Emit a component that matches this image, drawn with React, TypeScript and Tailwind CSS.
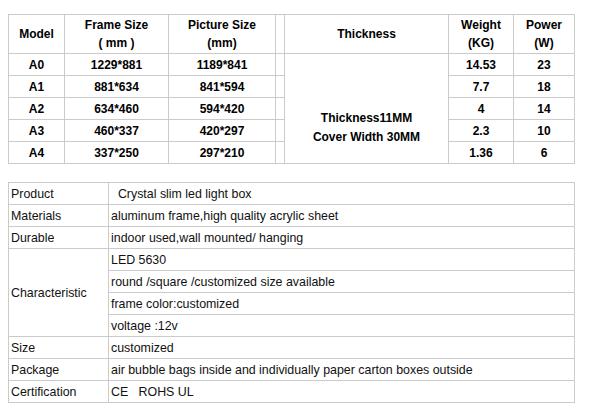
const sizes = [
  { model: 'A0', frame: '1229*881', picture: '1189*841', weight: '14.53', power: '23' },
  { model: 'A1', frame: '881*634', picture: '841*594', weight: '7.7', power: '18' },
  { model: 'A2', frame: '634*460', picture: '594*420', weight: '4', power: '14' },
  { model: 'A3', frame: '460*337', picture: '420*297', weight: '2.3', power: '10' },
  { model: 'A4', frame: '337*250', picture: '297*210', weight: '1.36', power: '6' },
]

const specs: { label: string; values: string[] }[] = [
  { label: 'Product', values: ['\u00a0 Crystal slim led light box'] },
  { label: 'Materials', values: ['aluminum frame,high quality acrylic sheet'] },
  { label: 'Durable', values: ['indoor used,wall mounted/ hanging'] },
  {
    label: 'Characteristic',
    values: ['LED 5630', 'round /square /customized size available', 'frame color:customized', 'voltage :12v'],
  },
  { label: 'Size', values: ['customized'] },
  { label: 'Package', values: ['air bubble bags inside and individually paper carton boxes outside'] },
  { label: 'Certification', values: ['CE \u00a0 ROHS UL'] },
]

const cell = 'border border-[#cbcbcb] p-0'

export default function App() {
  return (
    <div className="min-h-[410px] bg-white pl-2 pt-[14px] text-[12px] leading-[18px] text-black [font-family:'Liberation_Sans',Arial,sans-serif]">
      <table className="w-[566px] table-fixed border-collapse text-center font-bold">
        <colgroup>
          <col className="w-[56px]" />
          <col className="w-[104px]" />
          <col className="w-[107px]" />
          <col className="w-[9px]" />
          <col className="w-[164px]" />
          <col className="w-[65px]" />
          <col className="w-[61px]" />
        </colgroup>
        <thead>
          <tr className="h-[39px]">
            <th className={cell}>Model</th>
            <th className={cell}>
              Frame Size
              <br />( mm )
            </th>
            <th className={cell}>
              Picture Size
              <br />
              (mm)
            </th>
            <th className={cell}></th>
            <th className={cell}>Thickness</th>
            <th className={cell}>
              Weight
              <br />
              (KG)
            </th>
            <th className={cell}>
              Power
              <br />
              (W)
            </th>
          </tr>
        </thead>
        <tbody>
          {sizes.map((s, i) => (
            <tr key={s.model} className="h-[22px]">
              <td className={cell}>{s.model}</td>
              <td className={cell}>{s.frame}</td>
              <td className={cell}>{s.picture}</td>
              <td className={cell}></td>
              {i === 0 && (
                <td rowSpan={5} className={`${cell} pt-[38px] leading-[19px]`}>
                  Thickness11MM
                  <br />
                  Cover Width 30MM
                </td>
              )}
              <td className={cell}>{s.weight}</td>
              <td className={cell}>{s.power}</td>
            </tr>
          ))}
        </tbody>
      </table>

      <table className="mt-[18px] w-[566px] table-fixed border-collapse text-left text-[12.4px] text-[#111]">
        <colgroup>
          <col className="w-[100px]" />
          <col className="w-[466px]" />
        </colgroup>
        <tbody>
          {specs.flatMap((row) =>
            row.values.map((v, j) => (
              <tr key={row.label + j} className="h-[22px]">
                {j === 0 && (
                  <td rowSpan={row.values.length} className={`${cell} pl-[2px]`}>
                    {row.label}
                  </td>
                )}
                <td className={`${cell} pl-[2px] whitespace-pre`}>{v}</td>
              </tr>
            )),
          )}
        </tbody>
      </table>
    </div>
  )
}
